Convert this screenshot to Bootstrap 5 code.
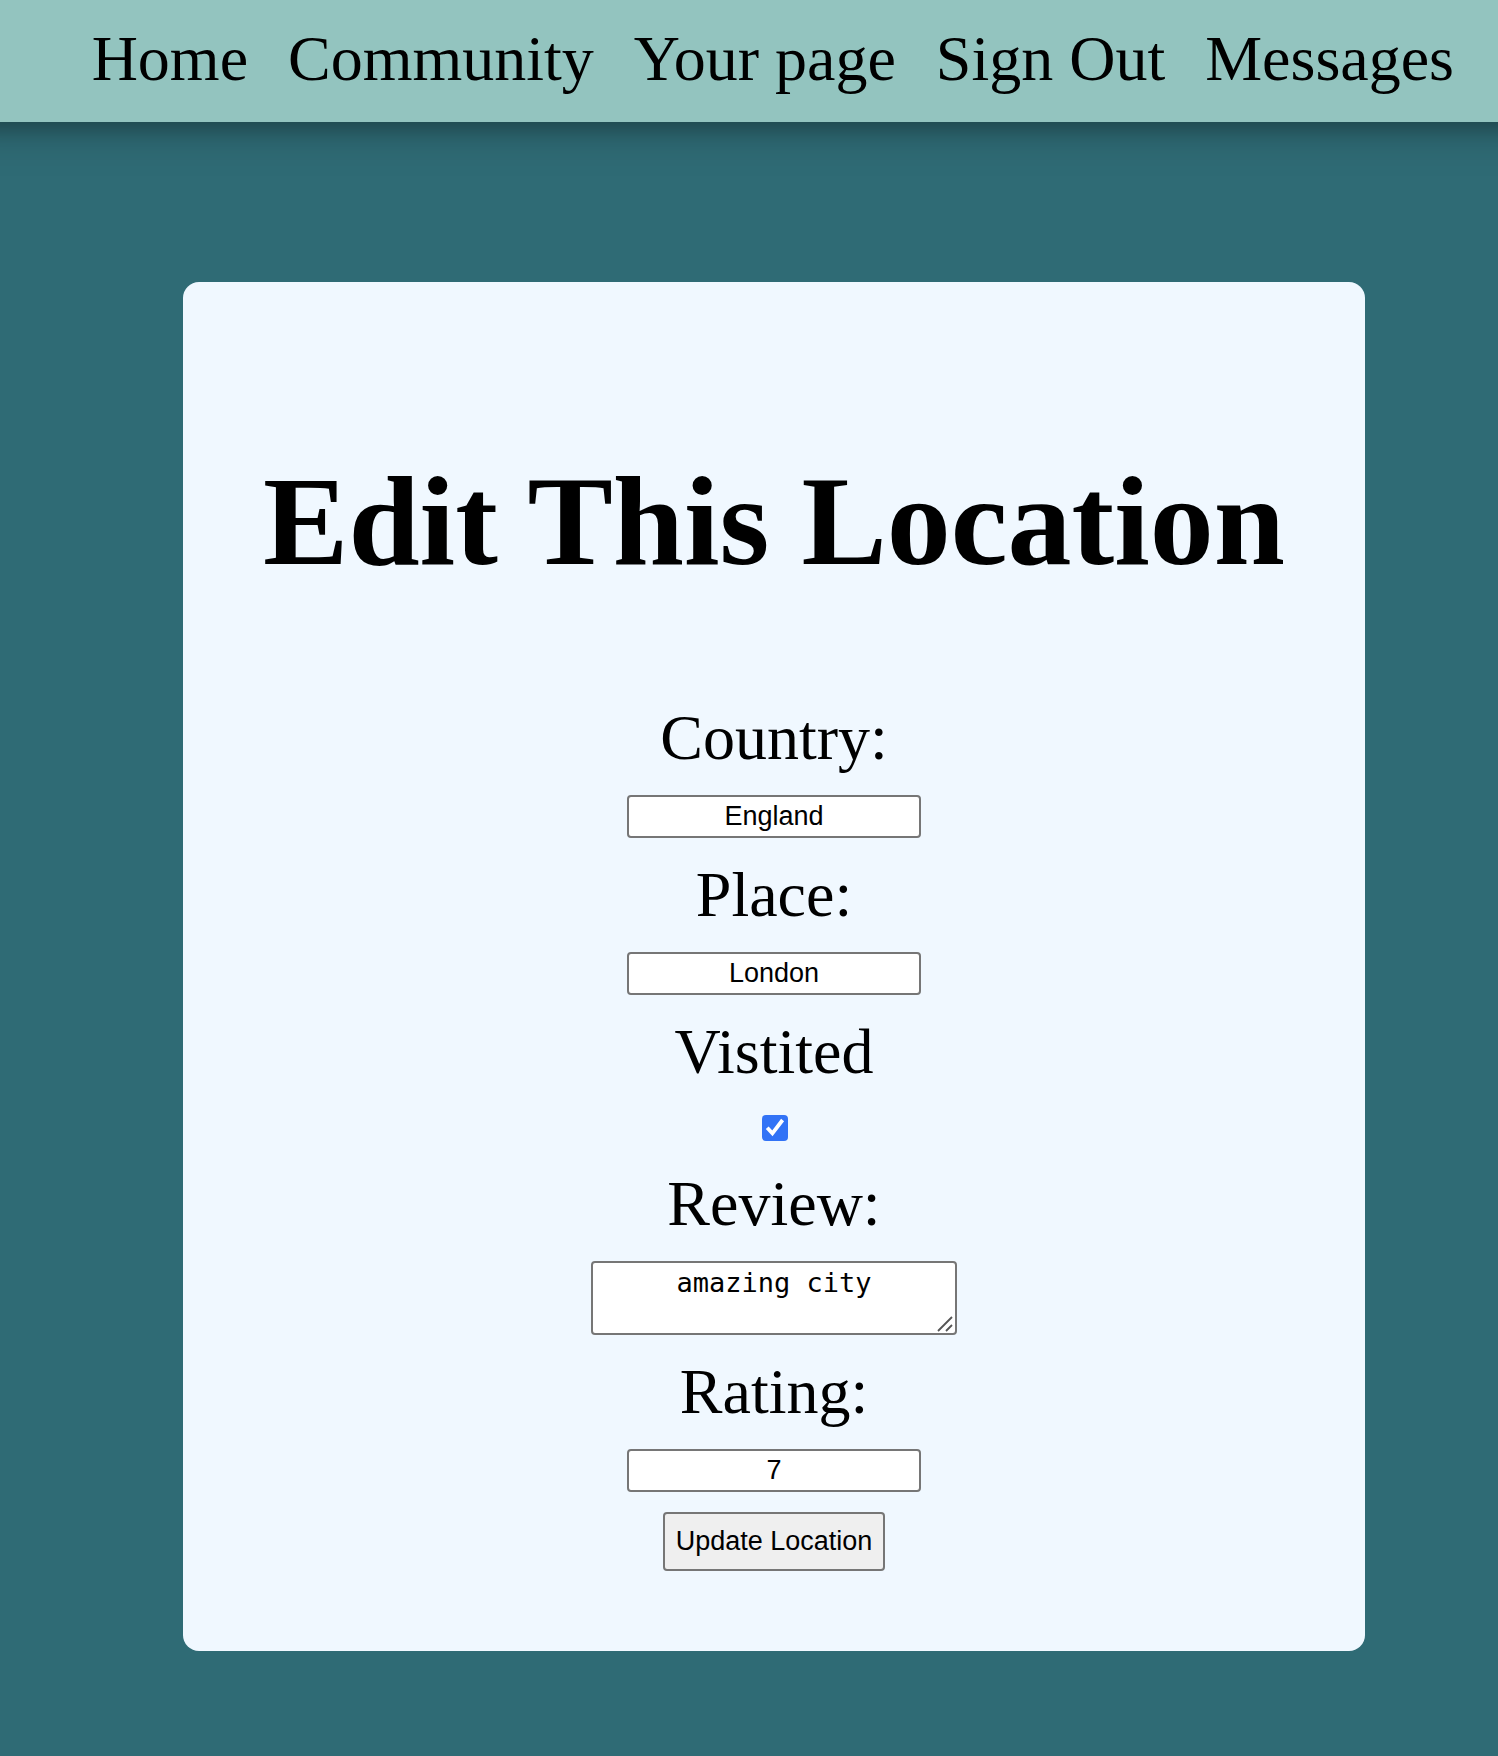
<!DOCTYPE html>
<html lang="en">
<head>
<meta charset="utf-8">
<meta name="viewport" content="width=device-width, initial-scale=1">
<title>Edit This Location</title>
<link href="https://cdn.jsdelivr.net/npm/bootstrap@5.3.0/dist/css/bootstrap.min.css" rel="stylesheet">
<style>
  body {
    background: #2f6b75;
    color: #000;
    font-family: "Liberation Serif", "Times New Roman", serif;
    font-size: 64px;
    line-height: 74px;
  }
  .site-nav {
    padding: 22px 44px 26px;
    background: #93c4bf;
    box-shadow: 0 -12px 16px 20px rgba(0, 0, 0, .2), 0 -28px 40px 40px rgba(0, 0, 0, .19);
  }
  .site-nav ul { column-gap: 40px; }
  .site-nav .nav-link { color: #000; font-size: 64px; }
  .page-area { padding: 160px 0 104px 50px; }
  .edit-panel {
    padding: 80px;
    background: #f0f8ff;
    border-radius: 16px;
  }
  .edit-panel h1 {
    margin: 86px 0 106px;
    font-size: 128px;
    font-weight: 700;
    line-height: 147px;
  }
  .edit-form { gap: 20px; }
  .field-box, .field-area, .update-btn {
    border: 2px solid #767676;
    border-radius: 4px;
    color: #000;
    font-family: "Liberation Sans", Arial, sans-serif;
    font-size: 27px;
  }
  .field-box, .field-area { width: 294px; padding: 2px 4px; text-align: center; background: #fff; }
  .field-box { height: 43px; line-height: 31px; }
  .field-area {
    display: block;
    width: 366px;
    height: 74px;
    padding: 4px;
    font-family: "DejaVu Sans Mono", monospace;
    line-height: 31px;
    overflow: hidden;
    resize: none;
  }
  .grip { right: 4px; bottom: 3px; pointer-events: none; }
  .form-check-input.tick {
    width: 26px;
    height: 26px;
    margin: 6px 6px 6px 8px;
    border: 0;
    border-radius: 4px;
  }
  .form-check-input.tick:checked {
    background-color: #3273f6;
    background-size: 26px 26px;
    background-image: url("data:image/svg+xml,%3csvg xmlns='http://www.w3.org/2000/svg' viewBox='0 0 26 26'%3e%3cpath fill='none' stroke='%23fff' stroke-width='3.8' d='M5.2 12.8l5.2 5.6L20.6 5'/%3e%3c/svg%3e");
  }
  .update-btn {
    --bs-btn-bg: #efefef;
    --bs-btn-border-color: #767676;
    --bs-btn-padding-x: 11px;
    height: 59px;
    padding-top: 0;
    padding-bottom: 0;
  }
</style>
</head>
<body>
<nav class="navbar site-nav">
  <ul class="nav ms-auto justify-content-end">
    <li><a class="nav-link p-0" href="#">Home</a></li>
    <li><a class="nav-link p-0" href="#">Community</a></li>
    <li><a class="nav-link p-0" href="#">Your page</a></li>
    <li><a class="nav-link p-0" href="#">Sign Out</a></li>
    <li><a class="nav-link p-0" href="#">Messages</a></li>
  </ul>
</nav>
<main class="page-area d-flex justify-content-center">
  <section class="edit-panel text-center">
    <h1>Edit This Location</h1>
    <form class="edit-form d-flex flex-column align-items-center">
      <label for="country">Country:</label>
      <input class="field-box" type="text" id="country" value="England">
      <label for="place">Place:</label>
      <input class="field-box" type="text" id="place" value="London">
      <label for="visited">Vistited</label>
      <input class="form-check-input tick" type="checkbox" id="visited" checked>
      <label for="review">Review:</label>
      <div class="position-relative">
        <textarea class="field-area" id="review" rows="2">amazing city</textarea>
        <svg class="grip position-absolute" width="16" height="16" viewBox="0 0 16 16" fill="none" stroke="#555" stroke-width="1.8" aria-hidden="true"><path d="M1 15L15 1M9 15l6-6"/></svg>
      </div>
      <label for="rating">Rating:</label>
      <input class="field-box" type="text" id="rating" value="7">
      <button class="btn update-btn" type="submit">Update Location</button>
    </form>
  </section>
</main>
<script src="https://cdn.jsdelivr.net/npm/bootstrap@5.3.0/dist/js/bootstrap.bundle.min.js"></script>
</body>
</html>
